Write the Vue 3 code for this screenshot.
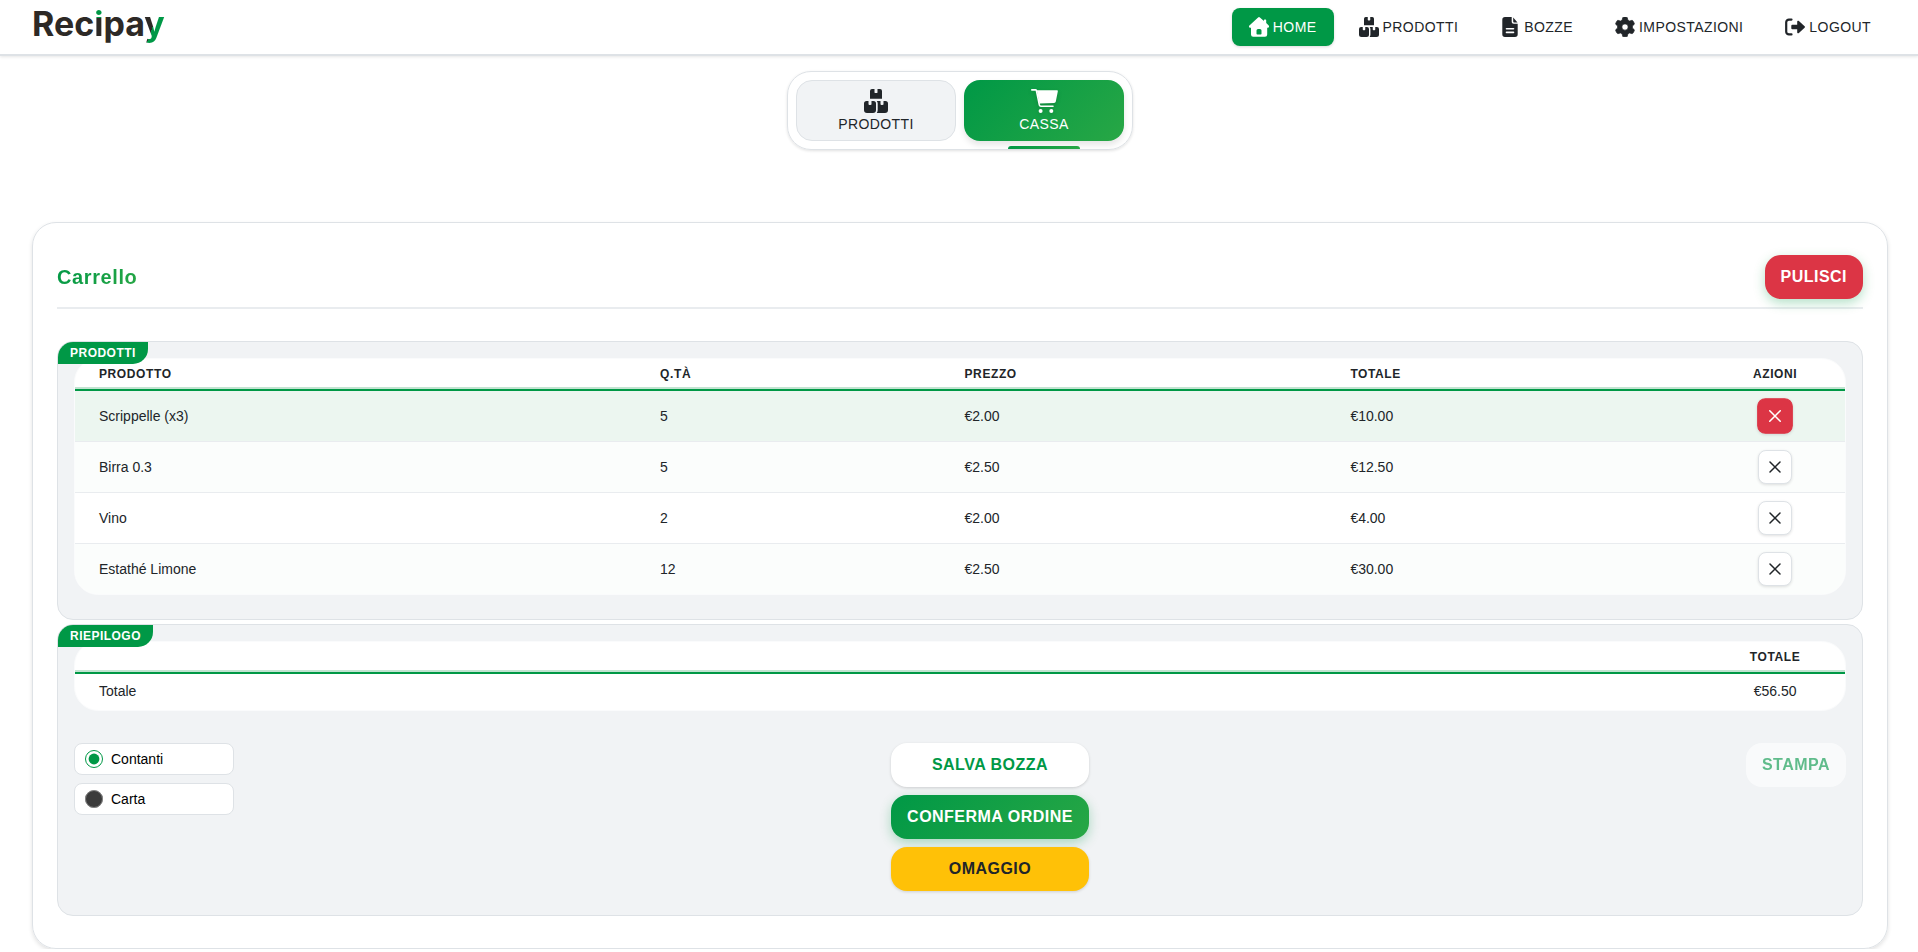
<script setup>
import { ref, computed } from 'vue'

const navItems = [
  { label: 'HOME', icon: 'home', active: true },
  { label: 'PRODOTTI', icon: 'boxes' },
  { label: 'BOZZE', icon: 'file' },
  { label: 'IMPOSTAZIONI', icon: 'gear' },
  { label: 'LOGOUT', icon: 'logout' },
]

const items = ref([
  { name: 'Scrippelle (x3)', qty: 5, price: 2, active: true },
  { name: 'Birra 0.3', qty: 5, price: 2.5 },
  { name: 'Vino', qty: 2, price: 2 },
  { name: 'Estathé Limone', qty: 12, price: 2.5 },
])

const payment = ref('contanti')
const total = computed(() => items.value.reduce((sum, i) => sum + i.qty * i.price, 0))
const euro = (value) => '€' + value.toFixed(2)
const remove = (index) => items.value.splice(index, 1)
const clear = () => { items.value = [] }
</script>

<template>
  <div class="page">
    <svg class="sprite" aria-hidden="true">
      <symbol id="home" viewBox="0 0 20 20">
        <path fill-rule="evenodd" d="M9.100.4a1.400 1.400 0 0 1 1.800 0l4 3.500V3.200c0-.4.3-.7.7-.7h.9c.4 0 .7.3.7.7v2.700l2.500 2.600c.8.900.3 2.200-.8 2.200h-.7v6.800a2.200 2.200 0 0 1-2.200 2.200H4.200A2.200 2.200 0 0 1 2 17.500v-6.800h-.900c-1.100 0-1.500-1.300-.7-2.100zM9 12a1.500 1.500 0 0 0-1.500 1.500v3.200c0 .5.3.8.8.8h3.400c.5 0 .8-.3.8-.8v-3.200A1.500 1.500 0 0 0 11 12z" />
      </symbol>
      <symbol id="boxes" viewBox="0 0 24 24">
        <path d="M8 0h2.500v3.200c0 .6.4.9.9.9h1.200c.5 0 .9-.3.9-.9V0H16a2 2 0 0 1 2 2v7.800H6V2a2 2 0 0 1 2-2z" />
        <path d="M2.500 12h2v3c0 .5.4.9.9.9h1.200c.5 0 .9-.4.9-.9v-3h2A2.500 2.500 0 0 1 12 14.500V21a3 3 0 0 1-3 3H3a3 3 0 0 1-3-3v-6.500A2.500 2.500 0 0 1 2.500 12z" />
        <path d="M12.800 12h3.700v3c0 .5.4.9.9.9h1.200c.5 0 .9-.4.9-.9v-3h2a2.500 2.500 0 0 1 2.500 2.500V21a3 3 0 0 1-3 3h-8.200c.6-.9.9-1.900.9-3v-6.500c0-1-.3-1.800-.9-2.500z" />
      </symbol>
      <symbol id="file" viewBox="0 0 20 20">
        <path fill-rule="evenodd" d="M5 0h6.700v4.800c0 1.200.8 2 2 2h4V17.300A2.700 2.700 0 0 1 15 20H5a2.700 2.700 0 0 1-2.700-2.700V2.700A2.700 2.700 0 0 1 5 0zM6.500 11a.8.8 0 0 0 0 1.600h7a.8.8 0 0 0 0-1.600zM6.500 14.600a.8.8 0 0 0 0 1.600h7a.8.8 0 0 0 0-1.600z" />
        <path d="M13.200.5 17.500 5.400h-3.400a.9.9 0 0 1-.9-.9z" />
      </symbol>
      <symbol id="gear" viewBox="0 0 512 512">
        <path d="M495.900 166.600c3.200 8.700 .5 18.400-6.400 24.600l-43.300 39.400c1.100 8.300 1.700 16.800 1.700 25.400s-.6 17.100-1.700 25.400l43.300 39.400c6.900 6.200 9.600 15.900 6.400 24.600c-4.400 11.900-9.700 23.300-15.800 34.300l-4.700 8.100c-6.600 11-14 21.400-22.100 31.200c-5.900 7.200-15.700 9.600-24.500 6.800l-55.700-17.700c-13.400 10.300-28.200 18.900-44 25.400l-12.500 57.100c-2 9.100-9 16.300-18.200 17.800c-13.800 2.300-28 3.500-42.500 3.500s-28.700-1.200-42.500-3.500c-9.200-1.500-16.200-8.700-18.200-17.800l-12.500-57.100c-15.800-6.500-30.600-15.100-44-25.400L83.100 425.900c-8.800 2.800-18.600 .3-24.500-6.800c-8.100-9.800-15.500-20.200-22.100-31.200l-4.700-8.100c-6.100-11-11.400-22.400-15.800-34.300c-3.200-8.700-.5-18.400 6.400-24.600l43.300-39.400C64.600 273.100 64 264.600 64 256s.6-17.100 1.700-25.400L22.400 191.200c-6.900-6.200-9.600-15.900-6.400-24.600c4.400-11.900 9.700-23.300 15.800-34.300l4.700-8.100c6.600-11 14-21.400 22.100-31.200c5.900-7.200 15.700-9.600 24.500-6.800l55.700 17.700c13.400-10.300 28.200-18.900 44-25.400l12.500-57.100c2-9.100 9-16.300 18.200-17.800C227.300 1.200 241.500 0 256 0s28.700 1.200 42.500 3.500c9.200 1.500 16.200 8.700 18.200 17.800l12.500 57.100c15.800 6.500 30.600 15.100 44 25.400l55.700-17.700c8.800-2.800 18.600-.3 24.500 6.800c8.100 9.800 15.500 20.200 22.100 31.200l4.700 8.100c6.100 11 11.400 22.400 15.800 34.300zM256 336a80 80 0 1 0 0-160 80 80 0 1 0 0 160z" stroke="currentColor" stroke-width="16" stroke-linejoin="round" />
      </symbol>
      <symbol id="logout" viewBox="0 0 20 20">
        <path d="M6.500 2.600H4A2.700 2.700 0 0 0 1.200 5.300v9.400A2.700 2.700 0 0 0 4 17.400h2.500" fill="none" stroke="currentColor" stroke-width="2.200" stroke-linecap="round" />
        <path d="M7.300 7.700h4.900V4.700c0-1 1-1.400 1.700-.7l5.700 5.300c.5.400.5 1 0 1.400l-5.700 5.300c-.7.700-1.700.3-1.700-.7v-3H7.300a1 1 0 0 1-1-1V8.700a1 1 0 0 1 1-1z" />
      </symbol>
      <symbol id="cart" viewBox="0 0 27 24">
        <path d="M.8.9h3.600c.6 0 .9.300 1 .8l3 14.300c.2.800.6 1.200 1.400 1.200H22" fill="none" stroke="currentColor" stroke-width="1.600" stroke-linecap="round" stroke-linejoin="round" />
        <path d="M5.800 1.300h20c.8 0 1.200.5 1 1.200l-2 10c-.2.900-.8 1.400-1.700 1.500l-14.600.5z" />
        <circle cx="9.600" cy="22" r="2" />
        <circle cx="20.300" cy="22" r="2" />
      </symbol>
      <symbol id="cross" viewBox="0 0 12 12">
        <path d="M1 1l10 10M11 1L1 11" fill="none" stroke="currentColor" stroke-width="1.500" stroke-linecap="round" />
      </symbol>
    </svg>

    <header class="topbar">
      <a class="logo" href="#">Rec<span class="logo-i">i</span>pa<span class="logo-y">y</span></a>
      <nav class="nav" aria-label="Principale">
        <a v-for="item in navItems" :key="item.label" href="#" class="nav-link" :class="{ active: item.active }">
          <svg class="nav-icon" aria-hidden="true"><use :href="'#' + item.icon" /></svg>
          <span>{{ item.label }}</span>
        </a>
      </nav>
    </header>

    <main class="content">
      <div class="tabs">
        <button type="button" class="tab">
          <svg class="tab-icon" aria-hidden="true"><use href="#boxes" /></svg>
          <span>PRODOTTI</span>
        </button>
        <button type="button" class="tab active">
          <svg class="tab-icon cart" aria-hidden="true"><use href="#cart" /></svg>
          <span>CASSA</span>
        </button>
      </div>

      <section class="card">
        <div class="card-head">
          <h1 class="title">Carrello</h1>
          <button type="button" class="btn danger" @click="clear">PULISCI</button>
        </div>

        <section class="panel">
          <h2 class="badge">PRODOTTI</h2>
          <div class="table-wrap">
            <table class="table">
              <colgroup>
                <col class="c-name"><col class="c-qty"><col class="c-price"><col class="c-total"><col class="c-end">
              </colgroup>
              <thead>
                <tr><th>PRODOTTO</th><th>Q.TÀ</th><th>PREZZO</th><th>TOTALE</th><th class="end">AZIONI</th></tr>
              </thead>
              <tbody>
                <tr v-for="(item, index) in items" :key="item.name" :class="{ active: item.active }">
                  <td>{{ item.name }}</td>
                  <td>{{ item.qty }}</td>
                  <td>{{ euro(item.price) }}</td>
                  <td>{{ euro(item.qty * item.price) }}</td>
                  <td class="end">
                    <button type="button" class="remove" :aria-label="'Rimuovi ' + item.name" @click="remove(index)">
                      <svg class="cross" aria-hidden="true"><use href="#cross" /></svg>
                    </button>
                  </td>
                </tr>
              </tbody>
            </table>
          </div>
        </section>

        <section class="panel">
          <h2 class="badge">RIEPILOGO</h2>
          <div class="table-wrap">
            <table class="table summary">
              <colgroup><col><col class="c-end"></colgroup>
              <thead>
                <tr><th></th><th class="end">TOTALE</th></tr>
              </thead>
              <tbody>
                <tr><td>Totale</td><td class="end">{{ euro(total) }}</td></tr>
              </tbody>
            </table>
          </div>
          <div class="actions">
            <div class="options">
              <label class="option" for="contanti">
                <input id="contanti" v-model="payment" class="radio" type="radio" name="payment" value="contanti">
                <span>Contanti</span>
              </label>
              <label class="option" for="carta">
                <input id="carta" v-model="payment" class="radio" type="radio" name="payment" value="carta">
                <span>Carta</span>
              </label>
            </div>
            <div class="buttons">
              <button type="button" class="btn plain">SALVA BOZZA</button>
              <button type="button" class="btn primary">CONFERMA ORDINE</button>
              <button type="button" class="btn warning">OMAGGIO</button>
            </div>
            <button type="button" class="btn plain" disabled>STAMPA</button>
          </div>
        </section>
      </section>
    </main>
  </div>
</template>

<style>
body {
  margin: 0;
  background: #fff;
}
</style>

<style scoped>
.page {
  --green: #009846;
  --gradient: linear-gradient(135deg, #009846, #28a745);
  --line: #dee2e6;
  --ink: #212529;
  font-family: "Liberation Sans", Arial, sans-serif;
  font-size: 14px;
  line-height: 16px;
  color: var(--ink);
}
.page *,
.page *::after {
  box-sizing: border-box;
}
.sprite {
  display: none;
}
svg {
  fill: currentColor;
  flex: none;
}
button {
  font-family: inherit;
  cursor: pointer;
}

.topbar {
  display: flex;
  align-items: flex-start;
  justify-content: space-between;
  padding: 8px 30px 8px 32px;
  border-bottom: 2px solid var(--line);
  box-shadow: 0 1px 3px rgba(0, 0, 0, 0.1);
}
.logo {
  font-family: Inter, sans-serif;
  font-size: 34px;
  font-weight: 700;
  line-height: 32px;
  color: #2d2926;
  text-decoration: none;
}
.logo-i,
.logo-y {
  color: transparent;
  background-clip: text;
  -webkit-background-clip: text;
}
.logo-i {
  background-image: linear-gradient(var(--green) 36%, #2d2926 36%);
}
.logo-y {
  background-image: linear-gradient(110deg, #2d2926 48%, var(--green) 48%);
}
.nav {
  display: flex;
  gap: 8px;
}
.nav-link {
  display: flex;
  align-items: center;
  gap: 4px;
  height: 38px;
  padding: 0 17px;
  border-radius: 8px;
  color: var(--ink);
  letter-spacing: 0.03em;
  text-decoration: none;
}
.nav-link.active {
  background: var(--green);
  color: #fff;
  box-shadow: 0 1px 3px rgba(0, 0, 0, 0.15);
}
.nav-icon {
  width: 20px;
  height: 20px;
}

.content {
  display: flex;
  flex-direction: column;
  align-items: center;
  gap: 72px;
  padding: 15px 30px 0 32px;
}
.tabs {
  display: flex;
  gap: 8px;
  padding: 8px;
  border: 1px solid var(--line);
  border-radius: 24px;
  box-shadow: 0 1px 3px rgba(0, 0, 0, 0.12);
}
.tab {
  position: relative;
  display: flex;
  flex-direction: column;
  align-items: center;
  gap: 3px;
  width: 160px;
  padding: 8px;
  border: 1px solid var(--line);
  border-radius: 16px;
  background: #f1f3f5;
  color: var(--ink);
  font-size: 14px;
  line-height: 16px;
  letter-spacing: 0.03em;
}
.tab.active {
  border-color: transparent;
  background: var(--gradient) border-box;
  color: #fff;
  box-shadow: 0 4px 6px rgba(0, 0, 0, 0.1);
}
.tab.active::after {
  content: "";
  position: absolute;
  left: 43px;
  right: 43px;
  bottom: -9px;
  height: 3px;
  border-radius: 3px 3px 0 0;
  background: var(--gradient);
}
.tab-icon {
  width: 24px;
  height: 24px;
}
.tab-icon.cart {
  width: 27px;
  filter: drop-shadow(0 2px 2px rgba(0, 0, 0, 0.15));
}

.card {
  align-self: stretch;
  padding: 32px 24px;
  border: 1px solid var(--line);
  border-radius: 24px;
  box-shadow: 0 2px 4px rgba(0, 0, 0, 0.12);
}
.card-head {
  display: flex;
  align-items: center;
  justify-content: space-between;
  padding-bottom: 8px;
  margin-bottom: 32px;
  border-bottom: 2px solid #e9ecef;
}
.title {
  margin: 0;
  font-size: 20px;
  line-height: 24px;
  letter-spacing: 0.03em;
  color: transparent;
  background: var(--gradient);
  background-clip: text;
  -webkit-background-clip: text;
}

.btn {
  height: 44px;
  padding: 0 16px;
  border: 0;
  border-radius: 16px;
  font-size: 16px;
  font-weight: 700;
  line-height: 20px;
  letter-spacing: 0.03em;
  box-shadow: 0 1px 3px rgba(0, 0, 0, 0.15);
}
.danger {
  background: #dc3545;
  color: #fff;
  box-shadow: 0 4px 12px rgba(0, 152, 70, 0.3);
}
.plain {
  background: #fff;
  color: var(--green);
}
.primary {
  background: var(--gradient);
  color: #fff;
  box-shadow: 0 4px 12px rgba(0, 152, 70, 0.3);
}
.warning {
  background: #ffc107;
  color: var(--ink);
}
.btn:disabled {
  opacity: 0.6;
  box-shadow: none;
  cursor: default;
}

.panel {
  position: relative;
  padding: 16px 16px 24px;
  border: 1px solid var(--line);
  border-radius: 16px;
  background: #f1f3f5;
}
.panel + .panel {
  margin-top: 4px;
}
.badge {
  position: absolute;
  top: 0;
  left: 0;
  margin: 0;
  padding: 3px 12px;
  border-radius: 15px 0;
  background: var(--green);
  color: #fff;
  font-size: 12px;
  line-height: 16px;
  letter-spacing: 0.04em;
}
.table-wrap {
  overflow: hidden;
  border: 1px solid #fafbfc;
  border-radius: 24px;
  background: #fff;
}
.table {
  width: 100%;
  table-layout: fixed;
  border-collapse: separate;
  border-spacing: 0;
}
.c-name { width: 31.7%; }
.c-qty { width: 17.2%; }
.c-price { width: 21.8%; }
.c-total { width: 21.4%; }
.c-end { width: 7.9%; }
.table th {
  height: 32px;
  padding: 8px 24px;
  border-bottom: 2px solid var(--green);
  box-shadow: inset 0 -2px #c2e4d1;
  font-size: 12px;
  line-height: 14px;
  letter-spacing: 0.05em;
  text-align: left;
}
.table th,
.table td {
  white-space: nowrap;
}
.table td {
  padding: 8px 24px;
  border-bottom: 1px solid #e9ecef;
}
.table .end {
  text-align: center;
}
.table tbody tr:nth-child(even) {
  background: #fbfdfc;
}
.table tbody tr.active {
  background: #ecf6f0;
}
.table tbody tr:last-child td {
  border-bottom: 0;
}
.summary td {
  padding: 9px 24px 11px;
}
.remove {
  display: inline-flex;
  align-items: center;
  justify-content: center;
  width: 34px;
  height: 34px;
  padding: 0;
  border: 1px solid var(--line);
  border-radius: 8px;
  background: #fff;
  color: var(--ink);
  vertical-align: top;
  box-shadow: 0 1px 3px rgba(0, 0, 0, 0.12);
}
.active .remove {
  border-color: #dc3545;
  background: #dc3545;
  color: #fff;
  transform: scale(1.05);
}
.cross {
  width: 12px;
  height: 12px;
}

.actions {
  display: flex;
  align-items: flex-start;
  justify-content: space-between;
  margin-top: 32px;
}
.options,
.buttons {
  display: flex;
  flex-direction: column;
  gap: 8px;
}
.option {
  display: flex;
  align-items: center;
  gap: 8px;
  width: 160px;
  height: 32px;
  padding: 0 10px;
  border: 1px solid var(--line);
  border-radius: 8px;
  background: #fff;
  color: #000;
}
.radio {
  width: 18px;
  height: 18px;
  margin: 0;
  accent-color: var(--green);
}
.radio:not(:checked) {
  color-scheme: dark;
}
</style>
